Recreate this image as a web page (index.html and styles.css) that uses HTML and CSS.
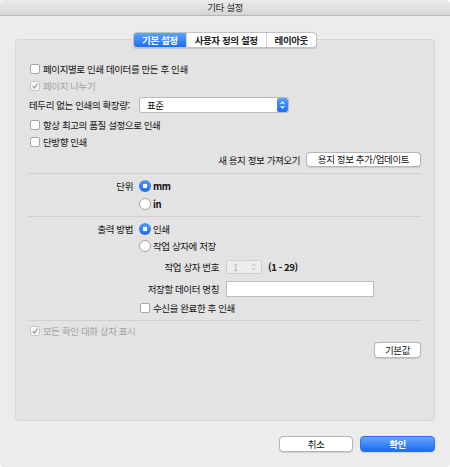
FILE: index.html
```html
<!DOCTYPE html>
<html lang="ko">
<head>
<meta charset="utf-8">
<title>기타 설정</title>
<link rel="stylesheet" href="styles.css">
</head>
<body>
<div class="window">
  <div class="titlebar">기타 설정</div>
  <div class="content">
    <div class="tabs">
      <span class="tab active">기본 설정</span>
      <span class="tab">사용자 정의 설정</span>
      <span class="tab">레이아웃</span>
    </div>
    <div class="group">
      <div class="row"><span class="cb"></span><span>페이지별로 인쇄 데이터를 만든 후 인쇄</span></div>
      <div class="row mt3 disabled"><span class="cb checked dis"><svg viewBox="0 0 10 10" width="8" height="8"><path d="M2 5.2 L4.2 7.6 L8.2 2" fill="none" stroke="#9a9a9a" stroke-width="1.3"/></svg></span><span>페이지 나누기</span></div>
      <div class="row mt3 tall"><span class="plain-lbl">테두리 없는 인쇄의 확장량:</span>
        <div class="select"><span class="select-text">표준</span><span class="select-btn"><svg viewBox="0 0 8 12" width="7" height="10"><path d="M1.8 4.6 L4 2.4 L6.2 4.6 M1.8 7.4 L4 9.6 L6.2 7.4" fill="none" stroke="#fff" stroke-width="1.3"/></svg></span></div>
      </div>
      <div class="row mt4"><span class="cb"></span><span>항상 최고의 품질 설정으로 인쇄</span></div>
      <div class="row mt3"><span class="cb"></span><span>단방향 인쇄</span></div>
      <div class="row mt2 btnrow end"><span>새 용지 정보 가져오기</span><button class="btn wide">용지 정보 추가/업데이트</button></div>
      <div class="sep"></div>
      <div class="row mt5"><span class="lbl">단위</span><span class="radio on"></span><span class="opt">mm</span></div>
      <div class="row mt4"><span class="lbl"></span><span class="radio"></span><span class="opt">in</span></div>
      <div class="sep"></div>
      <div class="row mt5"><span class="lbl">출력 방법</span><span class="radio on"></span><span>인쇄</span></div>
      <div class="row mt3"><span class="lbl"></span><span class="radio"></span><span>작업 상자에 저장</span></div>
      <div class="row mt6 mid"><span class="sublbl">작업 상자 번호</span>
        <div class="stepper"><span class="step-val">1</span><svg viewBox="0 0 8 12" width="7" height="10"><path d="M1.8 4.6 L4 2.4 L6.2 4.6 M1.8 7.4 L4 9.6 L6.2 7.4" fill="none" stroke="#b0b0b0" stroke-width="1.1"/></svg></div>
        <span class="range">(1 - 29)</span>
      </div>
      <div class="row mt5 tall"><span class="sublbl">저장할 데이터 명칭</span><span class="textfield"></span></div>
      <div class="row mt3 indent"><span class="cb"></span><span>수신을 완료한 후 인쇄</span></div>
      <div class="sep"></div>
      <div class="row mt3 disabled"><span class="cb checked dis"><svg viewBox="0 0 10 10" width="8" height="8"><path d="M2 5.2 L4.2 7.6 L8.2 2" fill="none" stroke="#8a8a8a" stroke-width="1.3"/></svg></span><span>모든 확인 대화 상자 표시</span></div>
      <div class="row mt4 mid end"><button class="btn small">기본값</button></div>
    </div>
    <div class="footer">
      <button class="btn foot">취소</button>
      <button class="btn foot primary">확인</button>
    </div>
  </div>
</div>
</body>
</html>
```

FILE: styles.css
```css
* { box-sizing: border-box; }
html, body { margin: 0; padding: 0; background: #ffffff; }
body {
  font-family: "Noto Sans CJK KR", "Noto Sans", sans-serif;
  font-size: 9.5px;
  letter-spacing: -0.4px;
  color: #111;
}
.window {
  width: 450px;
  height: 467px;
  background: #ececec;
  border-radius: 4px;
  overflow: hidden;
  display: flex;
  flex-direction: column;
}
.titlebar {
  height: 16px;
  line-height: 15px;
  text-align: center;
  color: #2e2e2e;
  background: linear-gradient(#ececec, #d6d6d6);
  border-bottom: 1px solid #b8b8b8;
}
.content {
  padding: 16px 15px 0 15px;
  display: flex;
  flex-direction: column;
}
.tabs {
  position: relative;
  z-index: 1;
  align-self: center;
  display: flex;
  height: 16px;
  background: #fff;
  border: 1px solid #c2c2c2;
  border-radius: 4px;
  box-shadow: 0 0.5px 1px rgba(0,0,0,0.15);
  overflow: hidden;
}
.tab {
  padding: 0 8px;
  line-height: 14px;
  font-weight: 700;
  color: #222;
  border-left: 1px solid #d4d4d4;
}
.tab:first-child { border-left: none; }
.tab.active {
  color: #fff;
  background: linear-gradient(#5fa3fb, #1a6cf4);
}
.group {
  margin-top: -9px;
  height: 382px;
  background: #e3e3e3;
  border: 1px solid #d6d6d6;
  border-radius: 4px;
  padding: 22px 13px 0 14px;
  display: flex;
  flex-direction: column;
}
.row {
  display: flex;
  align-items: center;
  height: 14px;
  line-height: 14px;
  white-space: nowrap;
}
.row.tall { height: 18px; }
.row.mid { height: 16px; }
.row.btnrow { height: 17px; }
.row.end { justify-content: flex-end; }
.row.indent { padding-left: 110px; }
.mt2 { margin-top: 2px; }
.mt3 { margin-top: 3px; }
.mt4 { margin-top: 4px; }
.mt5 { margin-top: 5px; }
.mt6 { margin-top: 6px; }
.disabled { color: #a3a3a3; }
.cb {
  width: 10px;
  height: 10px;
  flex: none;
  background: #fff;
  border: 1px solid #a6a6a6;
  border-radius: 2px;
  margin-right: 3px;
  display: flex;
  align-items: center;
  justify-content: center;
}
.cb.dis { border-color: #c4c4c4; background: #f6f6f6; }
.plain-lbl { margin-left: -1px; width: 110px; }
.select {
  width: 150px;
  height: 16px;
  background: #fff;
  border: 1px solid #b9b9b9;
  border-radius: 3px;
  display: flex;
  align-items: center;
  justify-content: space-between;
  overflow: hidden;
}
.select-text { padding-left: 7px; }
.select-btn {
  width: 11px;
  height: 14px;
  background: linear-gradient(#5ea2fb, #1c6cf3);
  border-radius: 2px;
  display: flex;
  align-items: center;
  justify-content: center;
}
.btn {
  font-family: inherit;
  font-size: 9.5px;
  letter-spacing: -0.4px;
  color: #111;
  background: #fff;
  border: 1px solid #b6b6b6;
  border-radius: 4px;
  box-shadow: 0 0.5px 1px rgba(0,0,0,0.12);
  padding: 0;
  line-height: 13px;
  margin: 0;
}
.btn.wide { width: 115px; height: 15px; margin-left: 6px; }
.btn.small { width: 47px; height: 16px; }
.sep {
  height: 1px;
  background: #d0d0d0;
  margin: 5px 0 0 -2px;
}
.lbl {
  width: 103px;
  text-align: right;
  margin-right: 6px;
  flex: none;
}
.radio {
  width: 12px;
  height: 12px;
  flex: none;
  border-radius: 50%;
  background: #fff;
  border: 1px solid #a4a4a4;
  margin-right: 2px;
}
.radio.on {
  border: none;
  background: radial-gradient(circle, #fff 0 2.2px, transparent 2.6px), linear-gradient(#4f99fa, #1a6cf4);
}
.opt { font-weight: 700; }
.sublbl {
  width: 189px;
  text-align: right;
  margin-right: 7px;
  flex: none;
}
.stepper {
  width: 36px;
  height: 14px;
  border: 1px solid #cfcfcf;
  border-radius: 3px;
  background: #ededed;
  display: flex;
  align-items: center;
  justify-content: space-between;
  padding: 0 4px 0 6px;
  color: #b0b0b0;
}
.range { margin-left: 6px; font-weight: 700; }
.textfield {
  width: 148px;
  height: 16px;
  background: #fff;
  border: 1px solid #bdbdbd;
}
.footer {
  margin-top: 15px;
  display: flex;
  justify-content: flex-end;
  gap: 7px;
}
.btn.foot { width: 74px; height: 16px; }
.btn.primary {
  width: 75px;
  color: #fff;
  font-weight: 700;
  border-color: #2a72e8;
  background: linear-gradient(#65a7fb, #1a6bf4);
}
```
